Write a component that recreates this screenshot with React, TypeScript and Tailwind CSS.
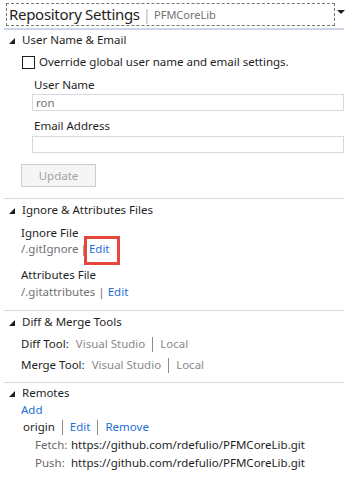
import React from 'react';

const Tri = () => (
  <svg width="7" height="7" viewBox="0 0 7 7" className="mr-[6px] ml-[9px] shrink-0">
    <polygon points="6,1 6,7 0,7" fill="#1e1e1e" />
  </svg>
);

const Section = ({ title }: { title: string }) => (
  <div className="flex h-[18px] items-center text-[#1e1e1e]">
    <Tri />
    <span>{title}</span>
  </div>
);

const Sep = ({ className }: { className: string }) => (
  <div className={`ml-[4px] h-px w-[340px] bg-[#d5d9e0] ${className}`} />
);

const VBar = () => <span className="mx-[7px] inline-block h-[15px] w-px bg-[#8a8a8a]" />;

export default function App() {
  return (
    <div className="h-[478px] w-[356px] overflow-hidden bg-white font-['Segoe_UI','Noto_Sans',sans-serif] text-[11.5px] leading-none text-[#1e1e1e]">
      {/* header */}
      <div className="flex items-center pt-[3px] pl-[6px]">
        <div className="flex h-[23px] w-[329px] items-center border border-dashed border-[#777] pl-[2px]">
          <span className="text-[15px] tracking-[-0.3px] text-[#1e1e1e]">Repository Settings</span>
          <span className="ml-[3px] text-[15px] text-[#b9b9b9]">|</span>
          <span className="ml-[3px] text-[11px] text-[#717171]">PFMCoreLib</span>
        </div>
        <svg width="8" height="5" viewBox="0 0 8 5" className="ml-[2px] mb-[4px]">
          <polygon points="0,0 8,0 4,4" fill="#1e1e1e" />
        </svg>
      </div>
      <div className="mt-[2px] ml-[4px] h-[2px] w-[340px] bg-[#ccd5e8]" />

      {/* user name & email */}
      <div className="mt-px">
        <Section title="User Name & Email" />
      </div>
      <div className="mt-[3px] flex h-[20px] items-center pl-[22px]">
        <div className="h-[13px] w-[13px] border border-[#1e1e1e] bg-white" />
        <span className="ml-[4px]">Override global user name and email settings.</span>
      </div>
      <div className="mt-[4px] flex h-[18px] items-center pl-[34px]">User Name</div>
      <div className="ml-[32px] flex h-[17px] w-[312px] items-center border border-[#d6d8e2] pl-[3px] text-[#717171]">
        ron
      </div>
      <div className="mt-[6px] flex h-[18px] items-center pl-[34px]">Email Address</div>
      <div className="mt-px ml-[32px] h-[17px] w-[312px] border border-[#d6d8e2]" />
      <div className="mt-[11px] ml-[21px] flex h-[23px] w-[75px] items-center justify-center border border-[#cccccc] bg-[#f5f5f5] text-[#a2a2a2]">
        Update
      </div>
      <Sep className="mt-[11px]" />

      {/* ignore & attributes */}
      <div className="mt-[2px]">
        <Section title="Ignore & Attributes Files" />
      </div>
      <div className="mt-[6px] flex h-[16px] items-center pl-[21px]">Ignore File</div>
      <div className="flex h-[16px] items-center pl-[21px]">
        <span className="text-[#717171]">/.gitIgnore</span>
        <span className="ml-[2px] text-[#717171]">|</span>
        <span className="relative ml-[2px] text-[#1c6fd6]">
          Edit
          <span className="absolute -top-[7px] -left-[5px] h-[29px] w-[36px] border-[3px] border-[#e5473f]" />
        </span>
      </div>
      <div className="mt-[10px] flex h-[16px] items-center pl-[21px]">Attributes File</div>
      <div className="mt-px flex h-[16px] items-center pl-[21px]">
        <span className="text-[#717171]">/.gitattributes</span>
        <span className="ml-[3px] text-[#717171]">|</span>
        <span className="ml-[3px] text-[#1c6fd6]">Edit</span>
      </div>
      <Sep className="mt-[10px]" />

      {/* diff & merge */}
      <div className="mt-[2px]">
        <Section title="Diff & Merge Tools" />
      </div>
      <div className="mt-[4px] flex h-[18px] items-center pl-[21px]">
        <span>Diff Tool:</span>
        <span className="ml-[7px] text-[#8a8a8a]">Visual Studio</span>
        <VBar />
        <span className="text-[#8a8a8a]">Local</span>
      </div>
      <div className="mt-[3px] flex h-[18px] items-center pl-[21px]">
        <span>Merge Tool:</span>
        <span className="ml-[7px] text-[#8a8a8a]">Visual Studio</span>
        <VBar />
        <span className="text-[#8a8a8a]">Local</span>
      </div>
      <Sep className="mt-[8px]" />

      {/* remotes */}
      <div className="mt-px">
        <Section title="Remotes" />
      </div>
      <div className="flex h-[16px] items-center pl-[21px] text-[#1c6fd6]">Add</div>
      <div className="mt-px flex h-[16px] items-center pl-[23px]">
        <span>origin</span>
        <VBar />
        <span className="text-[#1c6fd6]">Edit</span>
        <VBar />
        <span className="text-[#1c6fd6]">Remove</span>
      </div>
      <div className="mt-px flex h-[18px] items-center pl-[35px]">
        <span className="w-[36px] text-[#6e6666]">Fetch:</span>
        <span>https://github.com/rdefulio/PFMCoreLib.git</span>
      </div>
      <div className="flex h-[18px] items-center pl-[35px]">
        <span className="w-[36px] text-[#6e6666]">Push:</span>
        <span>https://github.com/rdefulio/PFMCoreLib.git</span>
      </div>
    </div>
  );
}
